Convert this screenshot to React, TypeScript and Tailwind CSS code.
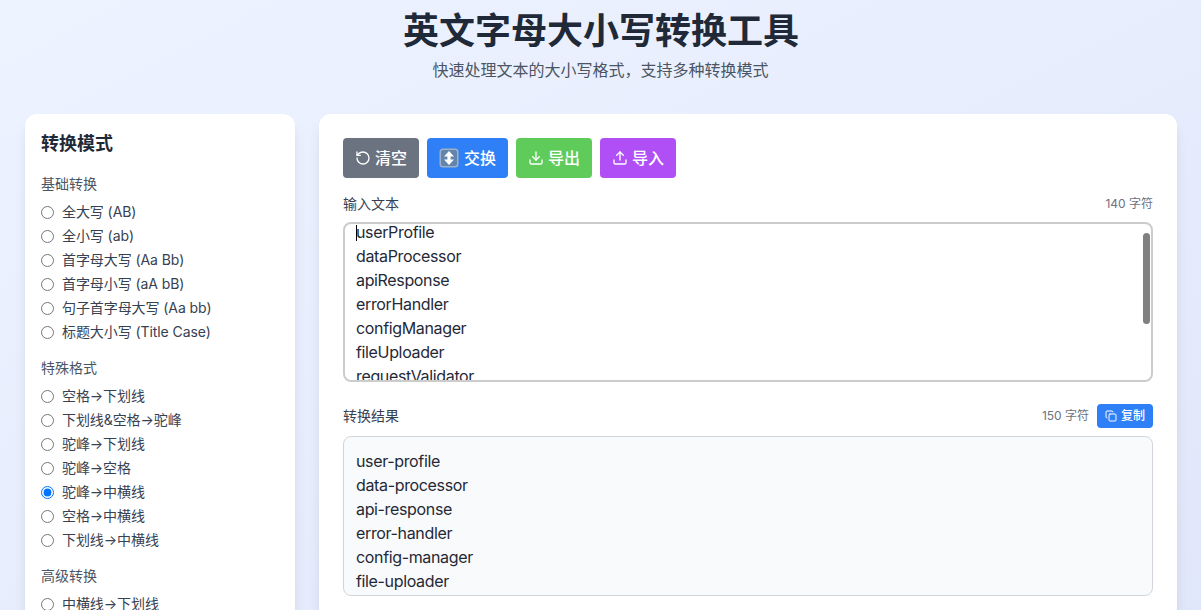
import React from 'react';
import { RotateCcw, Download, Upload, Copy } from 'lucide-react';

const FONT = "font-['Inter','Noto_Sans_CJK_SC',sans-serif]";

const groups = [
  {
    title: '基础转换',
    items: ['全大写 (AB)', '全小写 (ab)', '首字母大写 (Aa Bb)', '首字母小写 (aA bB)', '句子首字母大写 (Aa bb)', '标题大小写 (Title Case)'],
  },
  {
    title: '特殊格式',
    items: ['空格→下划线', '下划线&空格→驼峰', '驼峰→下划线', '驼峰→空格', '驼峰→中横线', '空格→中横线', '下划线→中横线'],
  },
  {
    title: '高级转换',
    items: ['中横线→下划线'],
  },
];

const inputLines = ['userProfile', 'dataProcessor', 'apiResponse', 'errorHandler', 'configManager', 'fileUploader', 'requestValidator'];
const outputLines = ['user-profile', 'data-processor', 'api-response', 'error-handler', 'config-manager', 'file-uploader'];

// apple style up-down arrow emoji
const SwapEmoji = () => (
  <svg width="20" height="20" viewBox="0 0 20 20" className="shrink-0 mr-px">
    <rect x="0.5" y="0.5" width="19" height="19" rx="3.5" fill="#9fb1c6" />
    <rect x="2" y="2" width="16" height="16" rx="2" fill="#6285ae" />
    <path d="M10 3 L15 8.5 H11.6 V11.5 H15 L10 17 L5 11.5 H8.4 V8.5 H5 Z" fill="#fff" />
  </svg>
);

const ActionButton = ({ className, icon, label }: { className: string; icon: React.ReactNode; label: string }) => (
  <button className={`h-10 px-3 rounded flex items-center gap-1 text-white font-medium text-base ${className}`}>
    {icon}
    <span>{label}</span>
  </button>
);

export default function App() {
  return (
    <div className={`h-[610px] overflow-hidden bg-gradient-to-br from-[#edf3ff] to-[#e1e7fa] ${FONT}`}>
      <header className="pt-[11px] pb-8 text-center">
        <h1 className="text-4xl font-bold text-[#1f2937] mb-[7px] pl-px">英文字母大小写转换工具</h1>
        <p className="text-base text-[#4b5563]">快速处理文本的大小写格式，支持多种转换模式</p>
      </header>

      <div className="flex gap-6 pr-6 pl-[25px] items-start">
        {/* Mode list */}
        <aside className="w-[270px] shrink-0 bg-white rounded-xl shadow-lg p-4 pt-[18px]">
          <h2 className="text-lg font-semibold text-[#1f2937] leading-6 mb-[16px]">转换模式</h2>
          {groups.map((group) => (
            <div key={group.title} className="mb-3">
              <h3 className="text-sm text-[#4b5563] leading-6 mb-[4px]">{group.title}</h3>
              {group.items.map((item) => (
                <label key={item} className="flex items-center h-6 text-sm tracking-[-0.08px] text-[#374151]">
                  <input type="radio" name="mode" defaultChecked={item === '驼峰→中横线'} className="mr-2 w-[13px] h-[13px]" />
                  <span>{item}</span>
                </label>
              ))}
            </div>
          ))}
        </aside>

        {/* Editor */}
        <main className="flex-1 bg-white rounded-xl shadow-lg p-6">
          <div className="flex gap-2 mb-4">
            <ActionButton className="bg-[#6b7280]" icon={<RotateCcw size={16} />} label="清空" />
            <ActionButton className="bg-[#2f7ff7]" icon={<SwapEmoji />} label="交换" />
            <ActionButton className="bg-[#5ecb5a]" icon={<Download size={16} />} label="导出" />
            <ActionButton className="bg-[#b14ff7]" icon={<Upload size={16} />} label="导入" />
          </div>

          <div className="flex justify-between items-center h-5 mb-[8px]">
            <span className="text-sm text-[#374151]">输入文本</span>
            <span className="text-xs text-[#6b7280]">140 字符</span>
          </div>
          <div className="relative h-40 border-2 border-[#cccccc] rounded-lg overflow-hidden text-base leading-6 tracking-[-0.35px] text-[#1f2937] mb-[22px]">
            <div className="px-[11px] -mt-[4px]">
              {inputLines.map((line) => (
                <div key={line}>{line}</div>
              ))}
            </div>
            <div className="absolute left-[11px] top-[1px] w-px h-4 bg-black" />
            <div className="absolute right-[1px] top-[9px] w-[7px] h-[91px] rounded-full bg-[#808080]" />
          </div>

          <div className="flex justify-between items-center h-6 mb-2">
            <span className="text-sm text-[#374151]">转换结果</span>
            <div className="flex items-center gap-2">
              <span className="text-xs text-[#6b7280]">150 字符</span>
              <button className="h-6 w-14 rounded bg-[#2f7ff7] text-white text-xs font-medium flex items-center justify-center gap-1">
                <Copy size={12} />
                <span>复制</span>
              </button>
            </div>
          </div>
          <div className="h-40 border border-[#d1d5db] bg-[#f9fafb] rounded-lg overflow-hidden p-3 text-base leading-6 tracking-[-0.35px] text-[#1f2937]">
            {outputLines.map((line) => (
              <div key={line}>{line}</div>
            ))}
          </div>
        </main>
      </div>
    </div>
  );
}
